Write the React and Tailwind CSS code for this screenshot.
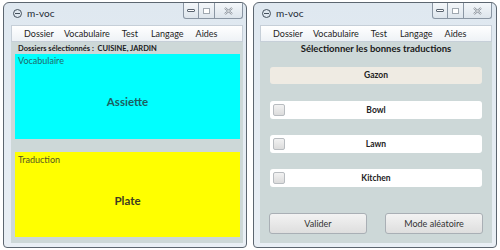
import React from 'react'

const font = { fontFamily: 'Lato, "Open Sans", sans-serif' }

function CaptionButtons() {
  return (
    <div className="flex h-[16px] self-start">
      <div className="w-[16px] h-full border border-[#8a96a3] border-t-0 rounded-bl-[3px] bg-gradient-to-b from-[#f4f7fa] to-[#dde5ec] flex items-center justify-center">
        <div className="w-[8px] h-[3px] border border-[#5a6470] rounded-[1px] bg-white" />
      </div>
      <div className="w-[15px] h-full border-b border-[#8a96a3] bg-gradient-to-b from-[#f4f7fa] to-[#dde5ec] flex items-center justify-center">
        <div className="w-[7px] h-[6px] border border-[#a0a8b0] bg-white" />
      </div>
      <div className="w-[29px] h-full border border-[#8a96a3] border-t-0 rounded-br-[3px] bg-gradient-to-b from-[#f4f7fa] to-[#dde5ec] flex items-center justify-center">
        <svg width="9" height="8" viewBox="0 0 9 8">
          <path d="M1 1 L8 7 M8 1 L1 7" stroke="#7d8690" strokeWidth="2" fill="none" />
          <path d="M1 1 L8 7 M8 1 L1 7" stroke="#ffffff" strokeWidth="0.8" fill="none" />
        </svg>
      </div>
    </div>
  )
}

function Window({ children, className }) {
  return (
    <div className={`h-[246px] border border-[#5c6670] rounded-t-[6px] rounded-b-[4px] bg-gradient-to-b from-[#dfe8f0] to-[#e9eff5] flex flex-col ${className}`} style={font}>
      <div className="h-[22px] flex items-start shrink-0">
        <div className="flex items-center gap-[5px] pt-[5px] pl-[2px] flex-1">
          <div className="w-[9px] h-[9px] rounded-full border border-[#44505c] flex items-center justify-center">
            <div className="w-[5px] h-px bg-[#44505c]" />
          </div>
          <span className="text-[10px] text-[#1e2a36] leading-none">m-voc</span>
        </div>
        <CaptionButtons />
      </div>
      <div className="h-[17px] shrink-0 border border-[#c6cfd8] bg-gradient-to-b from-[#ffffff] to-[#eef2f6] flex items-center text-[9px] text-[#1e1e1e] leading-none">
        {children[0]}
      </div>
      <div className="flex-1 bg-[#cdd8d8] flex flex-col min-h-0">{children[1]}</div>
    </div>
  )
}

function Menu({ items }) {
  return items.map(([label, ml]) => (
    <span key={label} className={ml}>{label}</span>
  ))
}

const menuItems = [['Dossier', 'ml-[12px]'], ['Vocabulaire', 'ml-[10px]'], ['Test', 'ml-[12px]'], ['Langage', 'ml-[13px]'], ['Aides', 'ml-[12px]']]

function Choice({ label }) {
  return (
    <div className="h-[18px] mx-[10px] bg-white rounded-[3px] flex items-center relative">
      <div className="absolute left-[3px] top-[3px] w-[12px] h-[12px] rounded-[2px] border border-[#b8bcc0] bg-gradient-to-b from-[#f2f2f2] to-[#dcdcdc]" />
      <span className="flex-1 text-center text-[8.5px] font-bold text-[#222]">{label}</span>
    </div>
  )
}

export default function App() {
  return (
    <div className="w-[500px] h-[250px] bg-white flex pt-[2px] pl-[3px] gap-[6px]">
      <Window className="w-[244px] pl-[7px] pr-[3px] pb-[4px]">
        <Menu items={menuItems} />
        <div className="flex flex-col h-full">
          <div className="h-[12px] pl-[7px] pt-[1px] text-[7.5px] font-bold text-[#1a1a1a] leading-[12px]">Dossiers sélectionnés :&nbsp; CUISINE, JARDIN</div>
          <div className="ml-[4px] mr-[3px] h-[85px] bg-[#00ffff] flex flex-col">
            <div className="pl-[3px] pt-[2px] text-[9px] text-[#1f6b6b] leading-none">Vocabulaire</div>
            <div className="flex-1 flex items-center justify-center text-[11.5px] font-bold text-[#1c5f5f]">Assiette</div>
          </div>
          <div className="ml-[4px] mr-[3px] mt-[13px] h-[85px] bg-[#ffff00] flex flex-col">
            <div className="pl-[3px] pt-[3px] text-[9px] text-[#555522] leading-none">Traduction</div>
            <div className="flex-1 flex items-center justify-center text-[11.5px] font-bold text-[#3c3c22]">Plate</div>
          </div>
        </div>
      </Window>
      <Window className="w-[244px] pl-[6px] pr-[4px] pb-[4px]">
        <Menu items={menuItems} />
        <div className="flex flex-col h-full">
          <div className="h-[16px] text-center text-[9.5px] font-bold text-[#1a1a1a] leading-[14px]">Sélectionner les bonnes traductions</div>
          <div className="h-[17px] mx-[10px] mt-[9px] bg-[#efebe3] rounded-[3px] flex items-center justify-center text-[8.5px] font-bold text-[#222]">Gazon</div>
          <div className="mt-[17px] flex flex-col gap-[16px]">
            <Choice label="Bowl" />
            <Choice label="Lawn" />
            <Choice label="Kitchen" />
          </div>
          <div className="mt-[26px] mx-[9px] flex justify-between">
            <div className="w-[98px] h-[21px] border border-[#a9afb5] rounded-[3px] bg-gradient-to-b from-[#f3f3f3] to-[#dedede] flex items-center justify-center text-[9px] text-[#333]">Valider</div>
            <div className="w-[98px] h-[21px] border border-[#a9afb5] rounded-[3px] bg-gradient-to-b from-[#f3f3f3] to-[#dedede] flex items-center justify-center text-[9px] text-[#333]">Mode aléatoire</div>
          </div>
        </div>
      </Window>
    </div>
  )
}
